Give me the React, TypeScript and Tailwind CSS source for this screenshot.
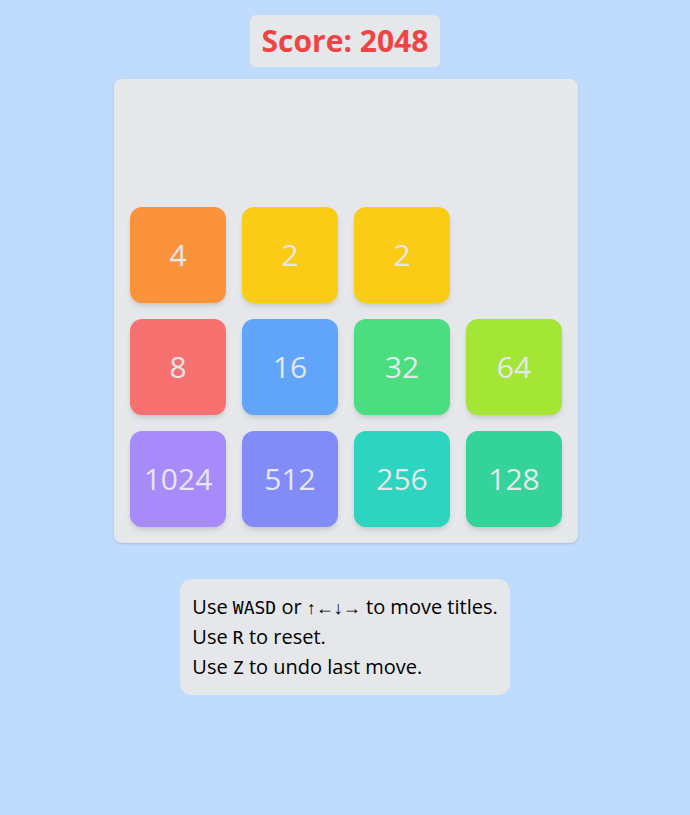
const rows: (number | null)[][] = [
  [null, null, null, null],
  [4, 2, 2, null],
  [8, 16, 32, 64],
  [1024, 512, 256, 128],
];

const tileColor: Record<number, string> = {
  2: "bg-[#facc15]",
  4: "bg-[#fb923c]",
  8: "bg-[#f87171]",
  16: "bg-[#60a5fa]",
  32: "bg-[#4ade80]",
  64: "bg-[#a3e635]",
  128: "bg-[#34d399]",
  256: "bg-[#2dd4bf]",
  512: "bg-[#818cf8]",
  1024: "bg-[#a78bfa]",
};

function Tile({ value }: { value: number | null }) {
  if (value === null) return <div className="h-24 w-24" />;
  return (
    <div
      className={`flex h-24 w-24 items-center justify-center rounded-xl text-3xl text-[#e5e7eb] shadow-md ${tileColor[value]}`}
    >
      {value}
    </div>
  );
}

export default function App() {
  return (
    <div className="flex min-h-[815px] flex-col items-center bg-[#bfdbfe] pt-[15px] font-['Open_Sans',sans-serif]">
      <div className="rounded-md bg-[#e5e7eb] px-3 py-2 text-3xl font-bold text-[#ef4444]">
        Score: 2048
      </div>

      <div className="ml-[2px] mt-3 grid grid-cols-4 gap-4 rounded-lg bg-[#e5e7eb] p-4 shadow-sm">
        {rows.flat().map((v, i) => (
          <Tile key={i} value={v} />
        ))}
      </div>

      <div className="mt-9 rounded-xl bg-[#e5e7eb] px-3 py-[13px] text-xl leading-[30px] text-black">
        <p>
          Use <kbd className="font-['DejaVu_Sans_Mono',monospace] text-lg">WASD</kbd> or{" "}
          <span className="text-lg">↑←↓→</span> to move titles.
        </p>
        <p>
          Use <kbd className="font-['DejaVu_Sans_Mono',monospace] text-lg">R</kbd> to reset.
        </p>
        <p>
          Use <kbd className="font-['DejaVu_Sans_Mono',monospace] text-lg">Z</kbd> to undo last move.
        </p>
      </div>
    </div>
  );
}
